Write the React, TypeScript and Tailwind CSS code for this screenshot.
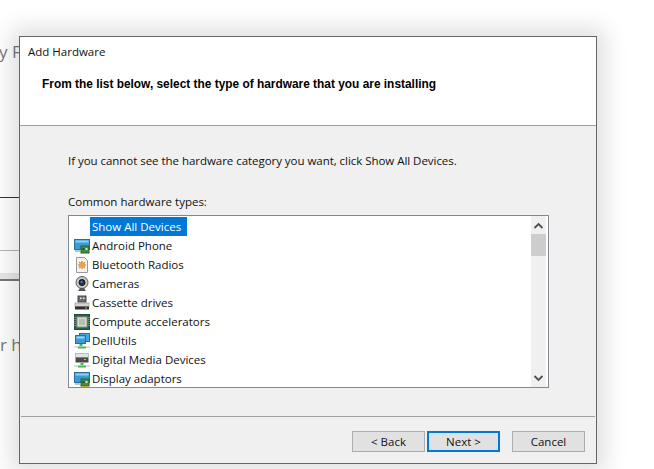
import React from 'react';

// small device icons, drawn on a 16x16 grid
const Monitor = () => (
  <svg width="16" height="16" viewBox="0 0 16 16">
    <rect x="0.5" y="1.5" width="15" height="10" fill="#3d9ad8" stroke="#2a6f9e" />
    <rect x="1.5" y="2.5" width="13" height="2" fill="#8fd0f2" />
    <path d="M1 12h5v2H1z" fill="#b9c4cc" />
    <rect x="7" y="8" width="8" height="7" fill="#3f8f4c" stroke="#255f30" />
    <rect x="8.5" y="10" width="2" height="2" fill="#1f4f2a" />
    <rect x="11.5" y="10" width="2" height="2" fill="#cfe8c0" />
    <path d="M8 15.5h6" stroke="#d9a520" />
  </svg>
);

const Radio = () => (
  <svg width="16" height="16" viewBox="0 0 16 16">
    <path d="M2.5 0.5h8l3 3v12h-11z" fill="#f6f3ea" stroke="#9a9a9a" />
    <path d="M8 4l1 2 2-1-1 2 2 1-2 1 1 2-2-1-1 2-1-2-2 1 1-2-2-1 2-1-1-2 2 1z" fill="#e8a64a" stroke="#c9812a" strokeWidth="0.5" />
  </svg>
);

const Camera = () => (
  <svg width="16" height="16" viewBox="0 0 16 16">
    <circle cx="8" cy="6.5" r="6" fill="#c9c9c9" stroke="#5c5c5c" />
    <circle cx="8" cy="6.5" r="3" fill="#25364a" stroke="#111" />
    <circle cx="7.5" cy="6" r="1" fill="#5f8fc0" />
    <path d="M4 15h8l-2-3H6z" fill="#555" />
  </svg>
);

const Cassette = () => (
  <svg width="16" height="16" viewBox="0 0 16 16">
    <rect x="4" y="1" width="8" height="6" fill="#6e6e6e" stroke="#444" />
    <rect x="6" y="2.5" width="1.5" height="1.5" fill="#eee" />
    <rect x="9" y="2.5" width="1.5" height="1.5" fill="#eee" />
    <rect x="1" y="8" width="14" height="3.5" fill="#d2d2d2" stroke="#8a8a8a" strokeWidth="0.6" />
    <rect x="1" y="11.5" width="14" height="3" fill="#2e2e2e" />
    <rect x="11" y="12.5" width="2" height="1" fill="#7ad06a" />
  </svg>
);

const Chip = () => (
  <svg width="16" height="16" viewBox="0 0 16 16">
    <rect x="0.5" y="0.5" width="15" height="15" fill="#2f5f4c" stroke="#234a3a" />
    <rect x="3" y="3" width="10" height="10" fill="#d5dccf" stroke="#8c9a8c" />
    <rect x="5" y="5" width="6" height="6" fill="#b5c0b0" />
    <path d="M1 3v10M15 3v10" stroke="#d9b84a" strokeDasharray="1 1" />
  </svg>
);

const NetMonitors = () => (
  <svg width="16" height="16" viewBox="0 0 16 16">
    <rect x="5.5" y="0.5" width="10" height="8" fill="#4aa6e0" stroke="#2a6f9e" />
    <rect x="1.5" y="2.5" width="10" height="8" fill="#3d9ad8" stroke="#2a6f9e" />
    <rect x="2.5" y="3.5" width="8" height="2" fill="#9bd6f4" />
    <path d="M7 11v2" stroke="#49b35a" strokeWidth="3" />
    <path d="M4 14.5h8" stroke="#49b35a" strokeWidth="2" />
    <rect x="0" y="13" width="4" height="2" fill="#ddd" />
    <rect x="12" y="13" width="4" height="2" fill="#ddd" />
  </svg>
);

const MediaDrive = () => (
  <svg width="16" height="16" viewBox="0 0 16 16">
    <rect x="1.5" y="1.5" width="13" height="4" fill="#e2e2e2" stroke="#9a9a9a" strokeWidth="0.6" />
    <rect x="1.5" y="5.5" width="13" height="5" fill="#4a4a4a" />
    <rect x="10" y="7" width="2" height="1" fill="#8fdc7a" />
    <path d="M8 11v2" stroke="#49b35a" strokeWidth="3" />
    <path d="M4 14.5h8" stroke="#49b35a" strokeWidth="2" />
    <rect x="0" y="13" width="4" height="2" fill="#ddd" />
    <rect x="12" y="13" width="4" height="2" fill="#ddd" />
  </svg>
);

const items: { name: string; icon: React.ReactNode }[] = [
  { name: 'Android Phone', icon: <Monitor /> },
  { name: 'Bluetooth Radios', icon: <Radio /> },
  { name: 'Cameras', icon: <Camera /> },
  { name: 'Cassette drives', icon: <Cassette /> },
  { name: 'Compute accelerators', icon: <Chip /> },
  { name: 'DellUtils', icon: <NetMonitors /> },
  { name: 'Digital Media Devices', icon: <MediaDrive /> },
  { name: 'Display adaptors', icon: <Monitor /> },
];

const WizardButton = ({ label, primary }: { label: string; primary?: boolean }) => (
  <button
    className={
      primary
        ? 'w-[73px] h-[21px] bg-[#e1e1e1] border-2 border-[#0078d7] text-[11.5px] leading-[17px] text-[#111]'
        : 'w-[73px] h-[21px] bg-[#e1e1e1] border border-[#adadad] text-[11.5px] leading-[19px] text-[#111]'
    }
  >
    {label}
  </button>
);

export default function App() {
  return (
    <div className="relative w-[654px] h-[469px] overflow-hidden bg-white font-['Open_Sans','Liberation_Sans',sans-serif]">
      {/* page behind the dialog, mostly covered */}
      <div className="w-[19px] overflow-hidden text-[#777]">
        <div className="h-[41px]" />
        <div className="h-[22px] w-[40px] text-[17px] leading-[22px] whitespace-nowrap -ml-px">y F</div>
        <div className="h-[134px]" />
        <div className="h-px bg-[#333]" />
        <div className="h-[52px]" />
        <div className="h-px bg-[#b5b5b5]" />
        <div className="h-[22px]" />
        <div className="h-[8px] bg-[#e8e8e8] border-b-2 border-[#777]" />
        <div className="h-[53px]" />
        <div className="h-[22px] w-[40px] text-[17px] leading-[22px] whitespace-nowrap">r h</div>
      </div>

      {/* dialog window */}
      <div className="absolute left-[19px] top-[36px] w-[578px] h-[428px] flex flex-col bg-[#f0f0f0] border border-[#666] shadow-[0_0_22px_8px_rgba(0,0,0,0.13)]">
        <div className="h-[89px] bg-white border-b border-[#a0a0a0] shrink-0">
          <div className="pl-[8px] pt-[6px] text-[11.5px] leading-[18px] text-[#111]">Add Hardware</div>
          <div className="pl-[22px] pt-[14px] font-['Liberation_Sans'] font-bold text-[11.9px] leading-[18px] text-black whitespace-nowrap">
            From the list below, select the type of hardware that you are installing
          </div>
        </div>

        <div className="flex-1 flex flex-col pl-[48px] pr-[46px] text-[#111]">
          <div className="mt-[26px] text-[11.5px] leading-[18px] tracking-[-0.04px]">If you cannot see the hardware category you want, click Show All Devices.</div>
          <div className="mt-[23px] text-[11.5px] leading-[18px]">Common hardware types:</div>
          <div className="mt-[4px] w-[481px] h-[173px] flex bg-white border border-[#828790]">
            <div className="flex-1 flex flex-col text-[11.5px] pl-[5px] pt-[1px]">
              <div className="h-[19px] pl-[16px] flex">
                <span className="w-[97px] bg-[#0078d7] text-white leading-[19px] pl-[2px]">Show All Devices</span>
              </div>
              {items.map((item) => (
                <div key={item.name} className="h-[19px] flex items-center gap-[2px]">
                  <span className="w-[16px] h-[16px] shrink-0">{item.icon}</span>
                  <span className="leading-[19px] whitespace-nowrap">{item.name}</span>
                </div>
              ))}
            </div>
            {/* scrollbar */}
            <div className="w-[15px] mr-[2px] bg-[#f0f0f0] flex flex-col items-center">
              <svg width="15" height="18" viewBox="0 0 15 18" className="shrink-0">
                <path d="M3.5 12L7.5 8l4 4" fill="none" stroke="#505050" strokeWidth="1.8" />
              </svg>
              <div className="w-[15px] h-[22px] bg-[#cdcdcd]" />
              <div className="flex-1" />
              <svg width="15" height="18" viewBox="0 0 15 18" className="shrink-0">
                <path d="M3.5 7l4 4 4-4" fill="none" stroke="#505050" strokeWidth="1.8" />
              </svg>
            </div>
          </div>
        </div>

        <div className="h-[47px] mx-px border-t border-[#a0a0a0] shrink-0 flex justify-end items-start gap-[2px] pt-[14px] pr-[10px]">
          <WizardButton label="< Back" />
          <WizardButton label="Next >" primary />
          <span className="w-[8px]" />
          <WizardButton label="Cancel" />
        </div>
      </div>
    </div>
  );
}
